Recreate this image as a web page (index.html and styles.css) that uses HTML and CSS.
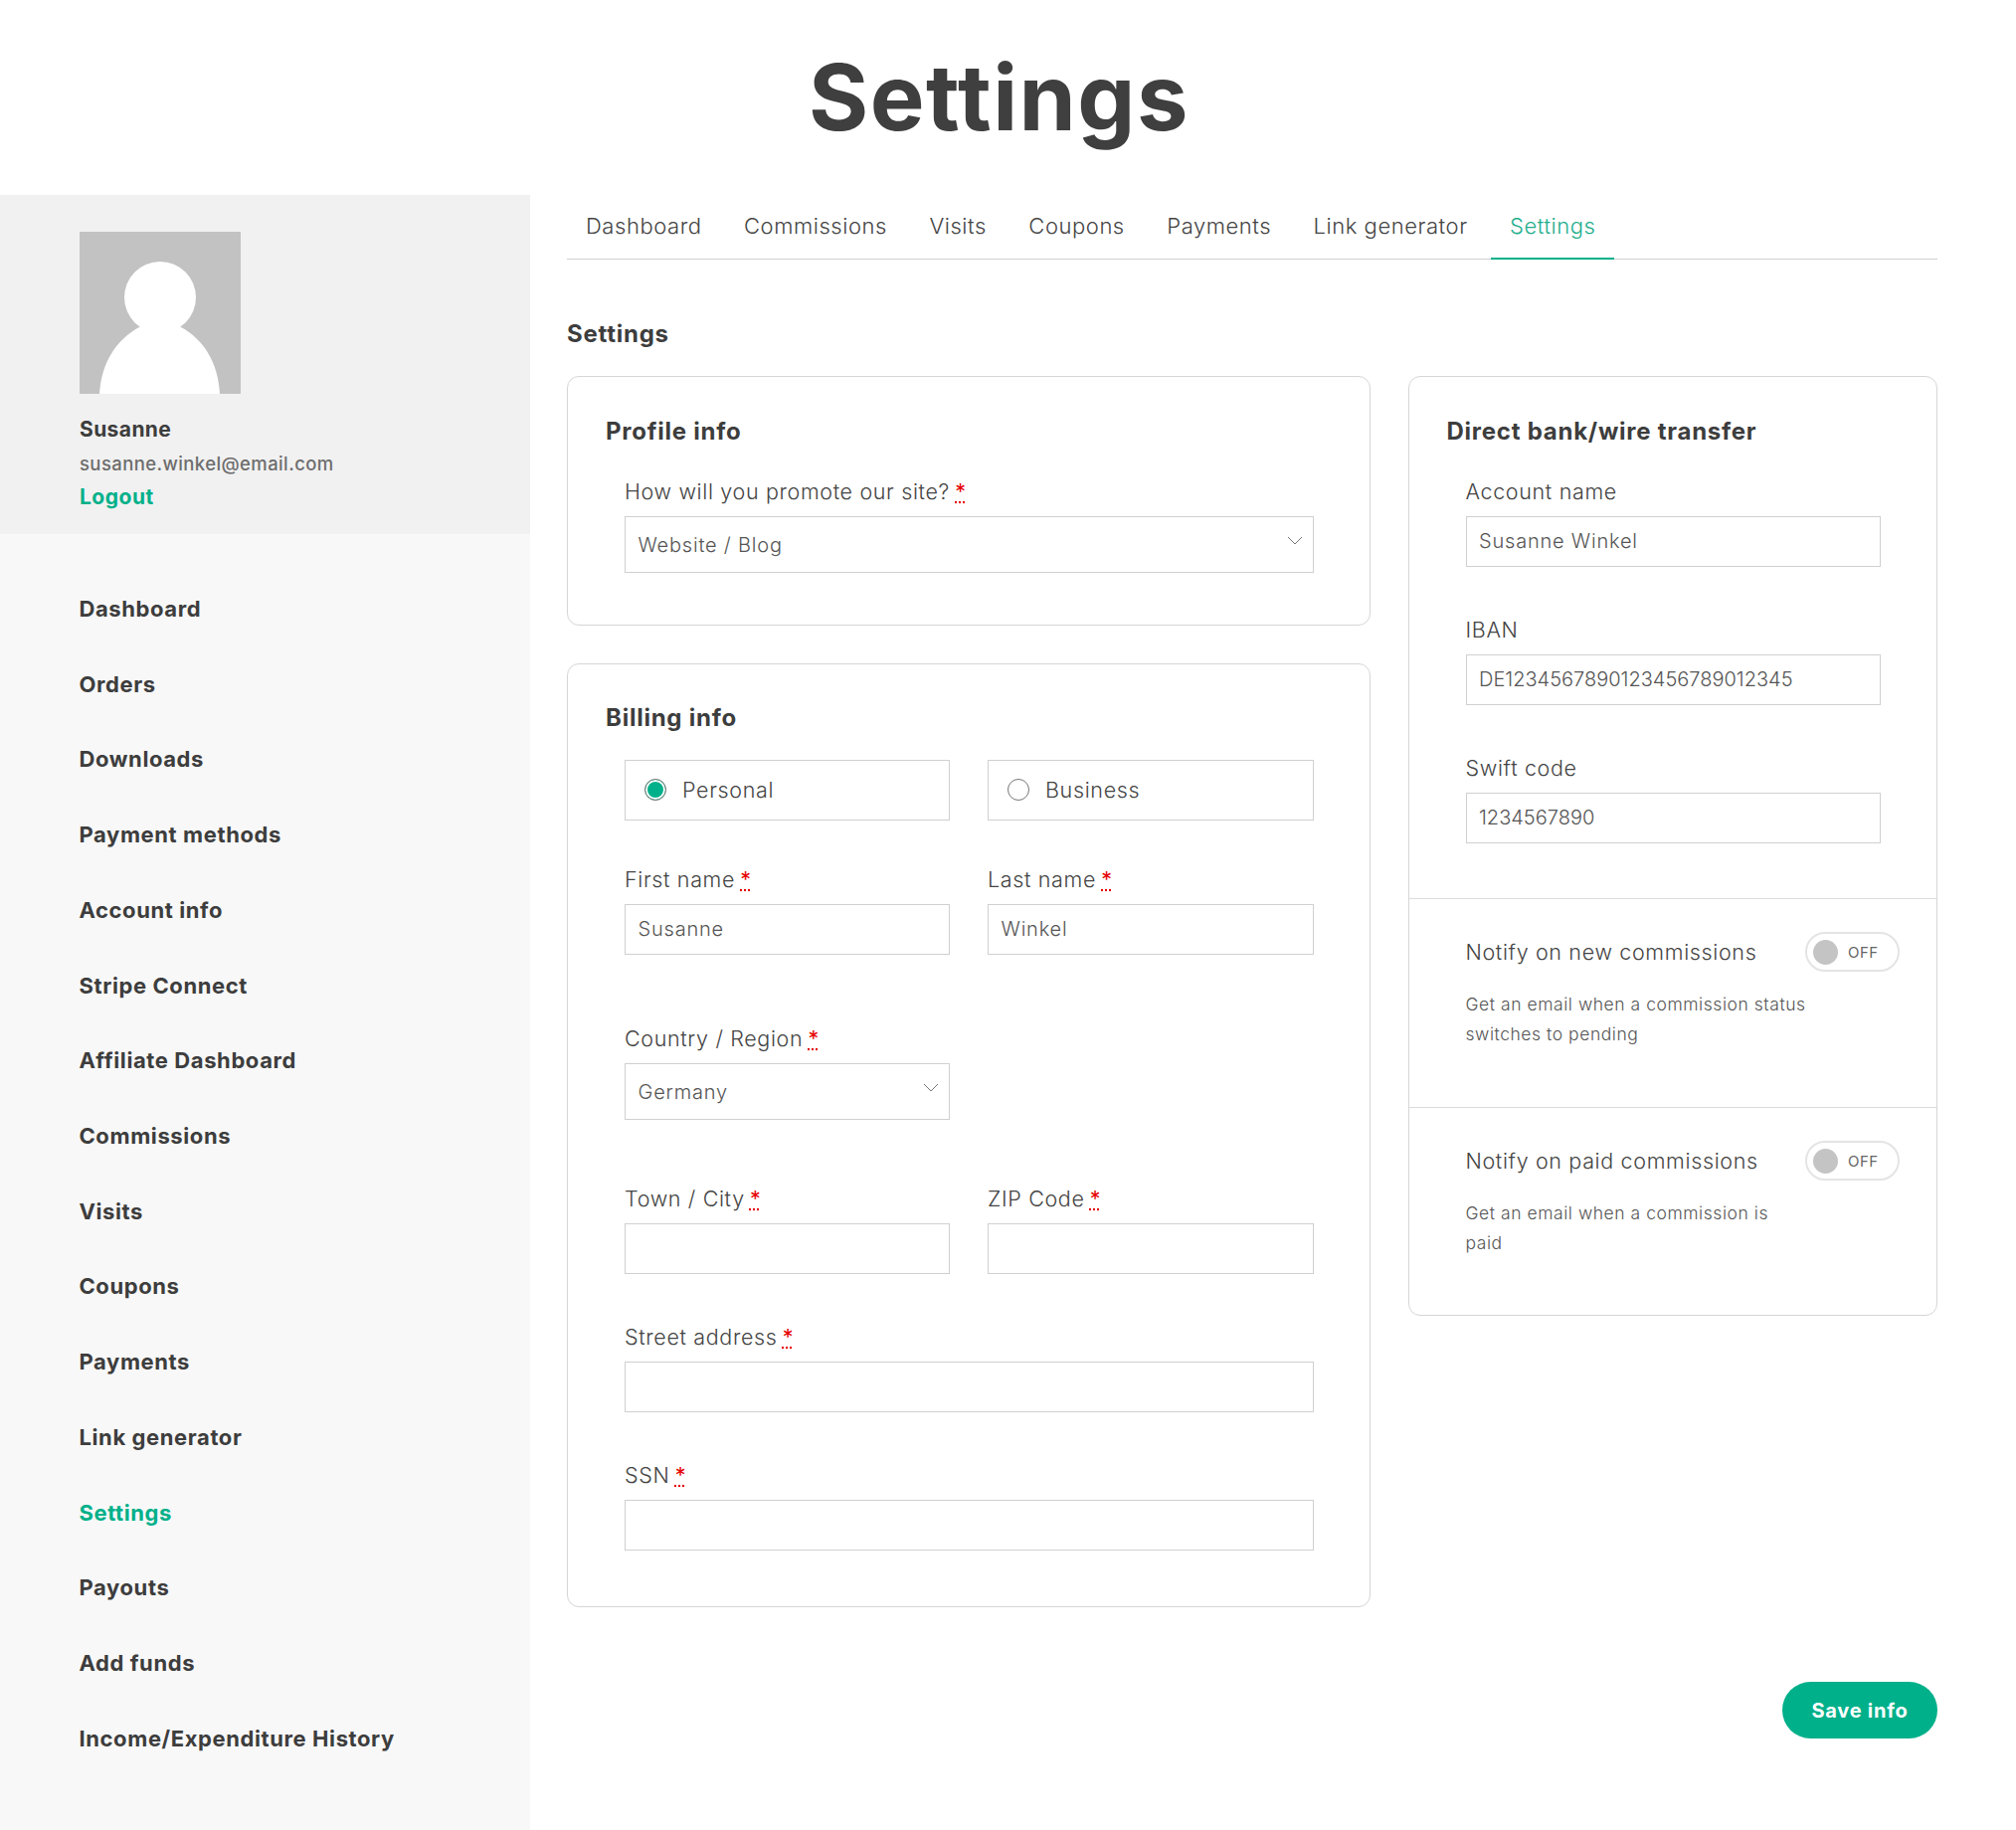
FILE: index.html
```html
<!DOCTYPE html>
<html lang="en">
<head>
<meta charset="utf-8">
<title>Settings</title>
<link rel="stylesheet" href="styles.css">
</head>
<body>
<h1 class="page-title">Settings</h1>
<div class="layout">
  <aside class="sidebar">
    <div class="profile">
      <svg class="avatar" viewBox="0 0 162 163" aria-hidden="true">
        <rect width="162" height="163" fill="#c2c2c2"/>
        <circle cx="81" cy="66" r="36" fill="#fff"/>
        <path d="M20 163C22 130 38 108 60 96L102 96C124 108 139 130 141 163Z" fill="#fff"/>
      </svg>
      <div class="profile-name">Susanne</div>
      <div class="profile-email">susanne.winkel@email.com</div>
      <a class="profile-logout" href="#">Logout</a>
    </div>
    <nav class="side-nav">
      <a href="#">Dashboard</a>
      <a href="#">Orders</a>
      <a href="#">Downloads</a>
      <a href="#">Payment methods</a>
      <a href="#">Account info</a>
      <a href="#">Stripe Connect</a>
      <a href="#">Affiliate Dashboard</a>
      <a href="#">Commissions</a>
      <a href="#">Visits</a>
      <a href="#">Coupons</a>
      <a href="#">Payments</a>
      <a href="#">Link generator</a>
      <a href="#" class="active">Settings</a>
      <a href="#">Payouts</a>
      <a href="#">Add funds</a>
      <a href="#">Income/Expenditure History</a>
    </nav>
  </aside>
  <main class="content">
    <nav class="tabs">
      <a href="#">Dashboard</a>
      <a href="#">Commissions</a>
      <a href="#">Visits</a>
      <a href="#">Coupons</a>
      <a href="#">Payments</a>
      <a href="#">Link generator</a>
      <a href="#" class="active">Settings</a>
    </nav>
    <h2 class="section-title">Settings</h2>
    <div class="columns">
      <div class="col-left">
        <section class="card card-profile">
          <h3 class="card-title">Profile info</h3>
          <div class="field">
            <label class="label">How will you promote our site? <abbr>*</abbr></label>
            <div class="select">Website / Blog<svg viewBox="0 0 16 9"><path d="M1 1l7 7 7-7"/></svg></div>
          </div>
        </section>
        <section class="card card-billing">
          <h3 class="card-title">Billing info</h3>
          <div class="two">
            <div class="radio-box"><span class="radio checked"></span>Personal</div>
            <div class="radio-box"><span class="radio"></span>Business</div>
          </div>
          <div class="two gap-names">
            <div class="field"><label class="label">First name <abbr>*</abbr></label><div class="input">Susanne</div></div>
            <div class="field"><label class="label">Last name <abbr>*</abbr></label><div class="input">Winkel</div></div>
          </div>
          <div class="two gap-country">
            <div class="field"><label class="label">Country / Region <abbr>*</abbr></label><div class="select">Germany<svg viewBox="0 0 16 9"><path d="M1 1l7 7 7-7"/></svg></div></div>
          </div>
          <div class="two gap-std">
            <div class="field"><label class="label">Town / City <abbr>*</abbr></label><div class="input"></div></div>
            <div class="field"><label class="label">ZIP Code <abbr>*</abbr></label><div class="input"></div></div>
          </div>
          <div class="field gap-std"><label class="label">Street address <abbr>*</abbr></label><div class="input"></div></div>
          <div class="field"><label class="label">SSN <abbr>*</abbr></label><div class="input"></div></div>
        </section>
      </div>
      <section class="card card-bank">
        <div class="bank-main">
          <h3 class="card-title">Direct bank/wire transfer</h3>
          <div class="field gap-bank"><label class="label">Account name</label><div class="input">Susanne Winkel</div></div>
          <div class="field gap-bank"><label class="label">IBAN</label><div class="input input-code">DE1234567890123456789012345</div></div>
          <div class="field"><label class="label">Swift code</label><div class="input input-code">1234567890</div></div>
        </div>
        <div class="notify">
          <div class="notify-row">
            <span class="notify-label">Notify on new commissions</span>
            <span class="toggle"><span class="knob"></span>OFF</span>
          </div>
          <p class="notify-desc">Get an email when a commission status switches to pending</p>
        </div>
        <div class="notify notify-last">
          <div class="notify-row">
            <span class="notify-label">Notify on paid commissions</span>
            <span class="toggle"><span class="knob"></span>OFF</span>
          </div>
          <p class="notify-desc">Get an email when a commission is paid</p>
        </div>
      </section>
    </div>
    <div class="actions"><button class="save" type="button">Save info</button></div>
  </main>
</div>
</body>
</html>
```
FILE: styles.css
```css
* { box-sizing: border-box; }
html, body { margin: 0; padding: 0; }
body {
  width: 2027px;
  height: 1840px;
  overflow: hidden;
  background: #fff;
  color: #3d3d3d;
  font-family: Inter, "Noto Sans", "Liberation Sans", sans-serif;
}
a { text-decoration: none; color: inherit; }

.page-title {
  margin: 0;
  height: 196px;
  padding-top: 37px;
  padding-right: 18px;
  text-align: center;
  font-size: 92px;
  line-height: 122px;
  font-weight: 700;
  letter-spacing: 1.5px;
  color: #3f3f3f;
}

.layout { display: flex; height: 1644px; }

.sidebar { width: 533px; flex: none; background: #f8f8f8; }
.profile {
  height: 341px;
  background: #f1f1f1;
  padding: 37px 0 0 80px;
}
.avatar { display: block; width: 162px; height: 163px; }
.profile-name {
  margin-top: 23px;
  font-size: 21px;
  line-height: 26px;
  font-weight: 650;
  letter-spacing: 0.4px;
}
.profile-email {
  margin-top: 8px;
  font-size: 18.5px;
  line-height: 26px;
  font-weight: 500;
  color: #6d6d6d;
  letter-spacing: 0.4px;
}
.profile-logout {
  display: block;
  margin-top: 8px;
  font-size: 21px;
  line-height: 26px;
  font-weight: 650;
  color: #00b08a;
  letter-spacing: 0.5px;
}

.side-nav { display: flex; flex-direction: column; padding: 38px 0 0 79.5px; }
.side-nav a {
  height: 75.73px;
  line-height: 75.73px;
  font-size: 22px;
  font-weight: 650;
  letter-spacing: 0.6px;
  color: #3d3d3d;
}
.side-nav a.active { color: #00b08a; }

.content { width: 1378px; margin-left: 37px; }

.tabs {
  display: flex;
  height: 65px;
  border-bottom: 1px solid #d0d0d0;
  gap: 4.5px;
}
.tabs a {
  display: block;
  padding: 0 19px;
  height: 65px;
  line-height: 63px;
  font-size: 22px;
  font-weight: 300;
  letter-spacing: 0.55px;
  color: #444;
}
.tabs a.active {
  color: #1fae8c;
  border-bottom: 2px solid #00b08a;
}

.section-title {
  margin: 60px 0 0;
  font-size: 24px;
  line-height: 30px;
  font-weight: 700;
  letter-spacing: 0.75px;
  color: #3d3d3d;
}

.columns {
  display: grid;
  grid-template-columns: 808px 532.5px;
  gap: 37.5px;
  margin-top: 27px;
  align-items: start;
}
.col-left { display: flex; flex-direction: column; gap: 38px; }

.card {
  background: #fff;
  border: 1px solid #d6d6d6;
  border-radius: 12px;
}
.card-profile { height: 251px; padding: 40px 56px 0 38px; }
.card-billing { height: 949px; padding: 39px 56px 0 38px; }
.card-bank { height: 945px; overflow: hidden; }

.card-title {
  margin: 0;
  font-size: 24px;
  line-height: 30px;
  font-weight: 700;
  letter-spacing: 0.75px;
  color: #3d3d3d;
}

.field { margin-left: 19px; }
.card-profile .field { margin-top: 32px; }
.label {
  display: block;
  padding-top: 1px;
  font-size: 21.5px;
  line-height: 25px;
  font-weight: 300;
  letter-spacing: 0.65px;
  color: #444;
  margin-bottom: 12px;
}
.label abbr {
  margin-left: -1.5px;
  color: #e60000;
  text-decoration: underline dotted #e60000;
  font-weight: 400;
}
.select, .input {
  display: flex;
  align-items: center;
  position: relative;
  border: 1px solid #d0d0d0;
  background: #fff;
  padding-left: 12.5px;
  font-size: 20px;
  font-weight: 300;
  letter-spacing: 0.8px;
  color: #555;
}
.select { height: 57px; padding-top: 1px; }
.input { height: 51px; padding-bottom: 2px; }
.input-code { letter-spacing: 0; }
.select svg {
  position: absolute;
  right: 10px;
  top: 19px;
  width: 16px;
  height: 9px;
  fill: none;
  stroke: #777;
  stroke-width: 1;
}

.two {
  display: grid;
  grid-template-columns: 327px 328px;
  gap: 38px;
  margin-left: 19px;
}
.two .field { margin-left: 0; }
.card-billing > .two:first-of-type { margin-top: 27px; }
.gap-names { margin-top: 46px; }
.gap-country { margin-top: 71px; }
.gap-std { margin-top: 66px; }
.card-billing > .field.gap-std { margin-top: 50px; margin-bottom: 50px; }

.radio-box {
  display: flex;
  align-items: center;
  height: 61px;
  padding-bottom: 1px;
  border: 1px solid #d0d0d0;
  padding-left: 19px;
  font-size: 21.5px;
  font-weight: 300;
  letter-spacing: 0.65px;
  color: #444;
}
.radio {
  width: 22px;
  height: 22px;
  border: 1px solid #767676;
  border-radius: 50%;
  margin-right: 16px;
  flex: none;
  background: #fff;
}
.radio.checked {
  background: #00b08a;
  box-shadow: inset 0 0 0 2px #fff;
}

.bank-main { height: 525px; padding: 40px 56px 0 38px; border-bottom: 1px solid #dcdcdc; }
.bank-main .field { margin-top: 32px; }
.bank-main .field.gap-bank + .field { margin-top: 50px; }
.notify { height: 210px; padding: 33px 37px 0 57px; border-bottom: 1px solid #dcdcdc; }
.notify-last { height: 208px; border-bottom: 0; }
.notify-row {
  display: flex;
  align-items: center;
  justify-content: space-between;
  height: 40px;
}
.notify-label {
  font-size: 21.5px;
  font-weight: 300;
  letter-spacing: 0.65px;
  color: #444;
}
.toggle {
  display: flex;
  align-items: center;
  width: 95px;
  height: 40px;
  border: 2px solid #e4e4e4;
  border-radius: 20px;
  padding-left: 6px;
  font-size: 15px;
  font-weight: 400;
  letter-spacing: 0.5px;
  color: #666;
}
.knob {
  width: 25px;
  height: 25px;
  border-radius: 50%;
  background: #c4c4c4;
  margin-right: 10px;
}
.notify-desc {
  margin: 18px 0 0;
  width: 350px;
  font-size: 17.5px;
  line-height: 30px;
  font-weight: 300;
  letter-spacing: 0.55px;
  color: #555;
}
.notify-last .notify-desc { width: 320px; }

.actions { display: flex; justify-content: flex-end; margin-top: 75px; }
.save {
  width: 156px;
  height: 57px;
  border: 0;
  border-radius: 29px;
  background: #00b08a;
  color: #fff;
  font-family: inherit;
  font-size: 20px;
  font-weight: 700;
  letter-spacing: 0.75px;
}
```
